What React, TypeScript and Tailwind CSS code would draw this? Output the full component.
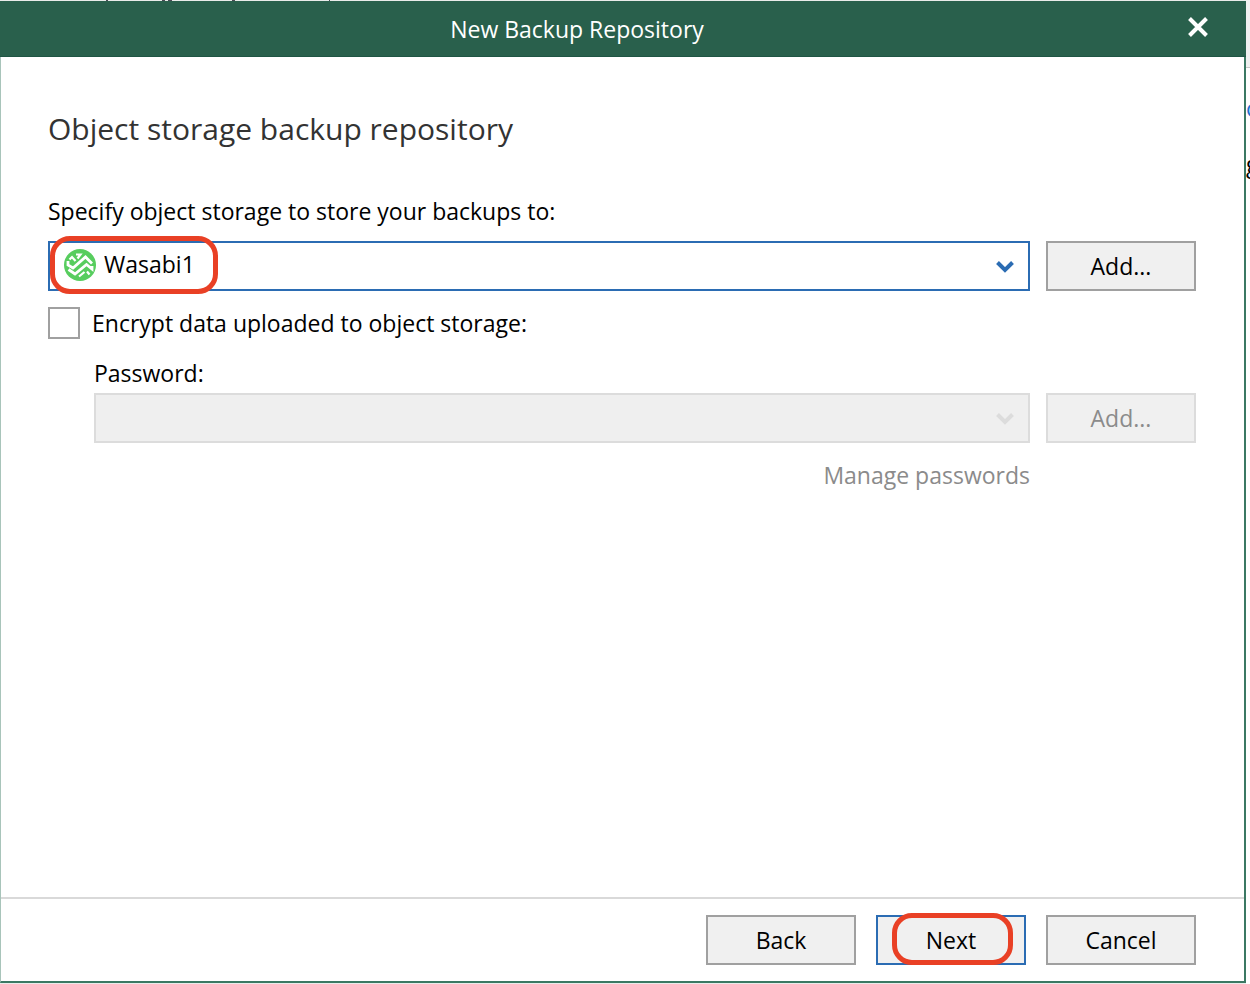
import React, { useState } from "react";
import clsx from "clsx";

interface DialogButtonProps {
  children: React.ReactNode;
  primary?: boolean;
  disabled?: boolean;
}

function DialogButton({ children, primary, disabled }: DialogButtonProps) {
  return (
    <button
      type="button"
      disabled={disabled}
      className={clsx(
        "h-[50px] w-[150px] shrink-0 border-2 bg-[#f0f0f0] text-center",
        primary && "border-[#2b6cb3]",
        !primary && !disabled && "border-[#a0a0a0]",
        disabled && "border-[#dcdcdc] text-[#8b8b8b]"
      )}
    >
      {children}
    </button>
  );
}

function Chevron({ className }: { className?: string }) {
  return (
    <svg
      viewBox="0 0 18 12"
      className={clsx("pointer-events-none absolute right-4 top-5 h-3 w-[18px]", className)}
      fill="none"
      stroke="currentColor"
      strokeWidth="4"
      aria-hidden="true"
    >
      <path d="M1.5 1.5 9 9l7.500-7.500" />
    </svg>
  );
}

function WasabiIcon() {
  return (
    <svg viewBox="0 0 32 32" className="pointer-events-none absolute left-4 top-2 h-8 w-8" aria-hidden="true">
      <circle cx="16" cy="16" r="16" fill="#57cd5e" />
      <g fill="none" stroke="#fff" strokeWidth="2.800">
        <path d="M4 12v4l5 3 12.500-11 6.500 6.500" />
        <path d="M4.500 20.500 11 25l11.500-9.500L28 20v-3" />
        <path d="M5.500 10.500 8 8l3.500 4" strokeWidth="2.200" />
        <path d="M12 5.500h4.500l-3 4" strokeWidth="2.200" />
        <path d="M15 27.500 20.500 23M25.500 25.500 23 22.500" strokeWidth="2.200" />
      </g>
    </svg>
  );
}

export default function App() {
  const [storage, setStorage] = useState("Wasabi1");
  const [encrypt, setEncrypt] = useState(false);

  return (
    <div className="relative flex min-h-screen flex-col overflow-hidden bg-[#e9ecea] pt-px pr-1 pb-px font-['Open_Sans','Noto_Sans',sans-serif] text-[23px] leading-8 text-black">
      {/* window behind the dialog, only its edges show */}
      <svg className="absolute left-0 top-0 h-px w-[420px]" viewBox="0 0 420 1" aria-hidden="true">
        <path d="M106 .5h2M162 .5h3M168 .5h4M232 .5h3M329 .5h1" stroke="#4a4a55" />
      </svg>
      <div className="absolute bottom-0 right-0 top-0 w-1 overflow-hidden bg-white">
        <div className="h-[68px] border-b border-[#c8c8c8] bg-[#f0f0f0]" />
        <div className="pt-6 text-[#1f6fd0]">o</div>
        <div className="pt-6 text-black">g</div>
      </div>

      <div className="flex grow flex-col border-b-2 border-r-2 border-[#3b7863] border-l border-l-[#a8c4ba] bg-white">
        <header className="-ml-px -mr-[2px] flex h-14 items-center border-b border-[#1f5544] bg-[#29604c] text-white">
          <h1 className="grow text-center">New Backup Repository</h1>
          <button type="button" aria-label="Close" className="flex h-full w-[92px] items-center justify-center pb-1 pr-1">
            <svg viewBox="0 0 20 20" className="h-5 w-5" stroke="currentColor" strokeWidth="4" aria-hidden="true">
              <path d="M1.500 1.500l17 17M18.500 1.500l-17 17" />
            </svg>
          </button>
        </header>

        <main className="grow pl-[47px] pr-12 pt-[52px]">
          <h2 className="text-[30px] leading-10 text-[#333]">Object storage backup repository</h2>

          <label htmlFor="storage" className="mt-[46px] block">
            Specify object storage to store your backups to:
          </label>
          <div className="mt-[14px] flex gap-4">
            <div className="relative grow">
              <select
                id="storage"
                value={storage}
                onChange={(e) => setStorage(e.target.value)}
                className="h-[50px] w-full appearance-none border-2 border-[#2b6cb3] bg-white pb-1 pl-[54px] pr-12 outline-none"
              >
                <option>Wasabi1</option>
              </select>
              <WasabiIcon />
              <Chevron className="text-[#2b6cb3]" />
              <div className="pointer-events-none absolute -top-[5px] left-[2px] h-[58px] w-[168px] rounded-[20px] border-5 border-[#e94025]" />
            </div>
            <DialogButton>Add...</DialogButton>
          </div>

          <div className="mt-4 flex items-center gap-3">
            <input
              id="encrypt"
              type="checkbox"
              checked={encrypt}
              onChange={(e) => setEncrypt(e.target.checked)}
              className="h-8 w-8 appearance-none border-2 border-[#a0a0a0] bg-white checked:bg-[#2b6cb3]"
            />
            <label htmlFor="encrypt">Encrypt data uploaded to object storage:</label>
          </div>

          <div className="pl-[46px]">
            <label htmlFor="password" className="mt-[18px] block">
              Password:
            </label>
            <div className="mt-1 flex gap-4">
              <div className="relative grow">
                <select
                  id="password"
                  disabled={!encrypt}
                  className="h-[50px] w-full appearance-none border-2 border-[#dcdcdc] bg-[#efefef] opacity-100"
                />
                <Chevron className="text-[#dcdcdc]" />
              </div>
              <DialogButton disabled={!encrypt}>Add...</DialogButton>
            </div>
            <div className="mt-4 pr-[166px] text-right">
              <a href="#passwords" className="text-[#8b8b8b]">
                Manage passwords
              </a>
            </div>
          </div>
        </main>

        <footer className="flex justify-end gap-5 border-t-2 border-[#d9d9d9] px-12 py-4">
          <DialogButton>Back</DialogButton>
          <div className="relative">
            <DialogButton primary>Next</DialogButton>
            <div className="pointer-events-none absolute -top-[2px] left-4 h-[52px] w-[121px] rounded-[20px] border-5 border-[#e94025]" />
          </div>
          <DialogButton>Cancel</DialogButton>
        </footer>
      </div>
    </div>
  );
}
